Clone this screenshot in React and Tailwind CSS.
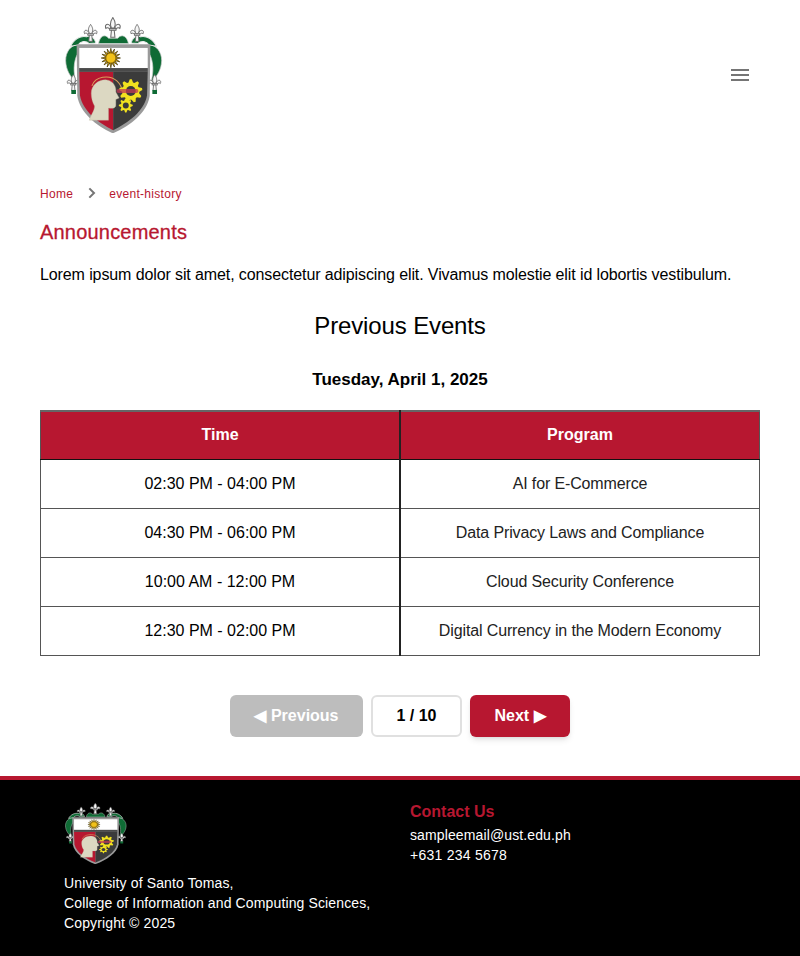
import { useState } from "react";

const rows = [
  { time: "02:30 PM - 04:00 PM", program: "AI for E-Commerce" },
  { time: "04:30 PM - 06:00 PM", program: "Data Privacy Laws and Compliance" },
  { time: "10:00 AM - 12:00 PM", program: "Cloud Security Conference" },
  { time: "12:30 PM - 02:00 PM", program: "Digital Currency in the Modern Economy" },
];

const starPoints = (cx, cy, outer, inner, n) =>
  Array.from({ length: n * 2 }, (_, i) => {
    const r = i % 2 === 0 ? outer : inner;
    const a = (Math.PI * i) / n;
    return `${cx + r * Math.sin(a)},${cy - r * Math.cos(a)}`;
  }).join(" ");

const gearPoints = (cx, cy, outer, inner, n) =>
  Array.from({ length: n * 4 }, (_, i) => {
    const r = i % 4 === 0 || i % 4 === 1 ? outer : inner;
    const a = (Math.PI * 2 * (i - 0.5)) / (n * 4);
    return `${cx + r * Math.sin(a)},${cy - r * Math.cos(a)}`;
  }).join(" ");

const Fleur = ({ x, y, s = 1 }) => (
  <g transform={`translate(${x} ${y}) scale(${s})`} fill="#f6f6f6" stroke="#6a6a6a" strokeWidth="3">
    <path d="M0 -30 C7 -20 10 -12 4 0 L-4 0 C-10 -12 -7 -20 0 -30 Z" />
    <path d="M-6 -4 C-14 -16 -25 -10 -20 1 C-16 -3 -12 -1 -8 4 Z" />
    <path d="M6 -4 C14 -16 25 -10 20 1 C16 -3 12 -1 8 4 Z" />
    <rect x="-9" y="1" width="18" height="5" />
    <path d="M-4 6 H4 L6 26 H-6 Z" />
  </g>
);

// crest drawn in the coordinates of a 3x crop of the logo
const Crest = ({ width, height, className }) => (
  <svg viewBox="45 35 295 345" width={width} height={height} preserveAspectRatio="none" className={className}>
    {/* green mantling */}
    <path d="M84 116 C62 120 47 138 47 165 C48 192 60 212 78 228 C70 200 70 170 82 146 Z" fill="#0f6b35" stroke="#cfcfcf" strokeWidth="2" />
    <path d="M298 116 C320 120 336 138 336 165 C335 192 322 212 304 228 C312 200 312 170 300 146 Z" fill="#0f6b35" stroke="#cfcfcf" strokeWidth="2" />
    <path d="M62 122 C72 100 92 90 110 94 C122 86 134 98 138 112 L118 114 C108 104 92 106 84 118 Z" fill="#0f6b35" stroke="#e8e8e8" strokeWidth="3" />
    <path d="M320 122 C310 100 290 90 272 94 C260 86 248 98 244 112 L264 114 C274 104 290 106 298 118 Z" fill="#0f6b35" stroke="#e8e8e8" strokeWidth="3" />
    <path d="M146 114 C150 92 164 84 176 98 L204 98 C216 84 232 92 236 114 Z" fill="#0f6b35" stroke="#d8d8d8" strokeWidth="2" />
    {/* finials */}
    <Fleur x={189} y={68} s={1.05} />
    <Fleur x={122} y={84} s={0.9} />
    <Fleur x={262} y={84} s={0.9} />
    <Fleur x={70} y={232} s={0.85} />
    <Fleur x={315} y={232} s={0.85} />
    <rect x="64" y="252" width="14" height="12" fill="#0f6b35" />
    <rect x="308" y="252" width="14" height="12" fill="#0f6b35" />
    {/* shield */}
    <path d="M80 116 L302 116 L300 270 C292 320 240 360 189 381 C140 360 90 320 82 270 Z" fill="#9a9a9a" />
    <rect x="88" y="127" width="206" height="60" fill="#ffffff" />
    <path d="M88 198 L190 198 L190 372 C145 350 98 315 90 268 Z" fill="#b71730" />
    <path d="M190 198 L294 198 L292 268 C284 315 235 350 190 372 Z" fill="#3b3b3b" />
    <rect x="88" y="187" width="206" height="11" fill="#4a4a4a" />
    {/* sun */}
    <polygon points={starPoints(183, 157, 29, 15, 16)} fill="#d9a514" stroke="#3a3000" strokeWidth="2" />
    <circle cx="183" cy="157" r="15" fill="#f2c21a" stroke="#6b5200" strokeWidth="2" />
    {/* ring and head */}
    <path d="M126 240 C135 212 178 204 202 226 C212 236 216 246 216 254" fill="none" stroke="#d9a05c" strokeWidth="3" />
    <path d="M124 262 C124 236 148 220 170 222 C192 225 200 244 198 258 L208 276 L198 280 L198 298 C198 306 188 308 176 306 L176 342 L118 342 C124 324 134 314 134 300 C128 290 124 276 124 262 Z" fill="#dcd8c2" stroke="#b9b49c" strokeWidth="1" />
    {/* gears */}
    <polygon points={gearPoints(243, 255, 35, 26, 9)} fill="#f2e21f" />
    <circle cx="243" cy="255" r="15" fill="#3b3b3b" />
    <polygon points={gearPoints(228, 298, 21, 15, 8)} fill="#f2e21f" />
    <circle cx="228" cy="298" r="9" fill="#3b3b3b" />
    <rect x="200" y="249" width="66" height="12" rx="6" fill="#c23a55" opacity="0.75" />
  </svg>
);

const App = () => {
  const [page] = useState(1);

  return (
    <div className="w-[800px] h-[956px] overflow-hidden bg-white text-black font-['Liberation_Sans',Arial,sans-serif]">
      <header className="h-[150px] flex items-center justify-between pl-[65px] pr-[51px]">
        <Crest width={98} height={116} className="-mt-[1px]" />
        <div className="flex flex-col gap-[3px]">
          <span className="block w-[18px] h-[2px] bg-[#757575]" />
          <span className="block w-[18px] h-[2px] bg-[#757575]" />
          <span className="block w-[18px] h-[2px] bg-[#757575]" />
        </div>
      </header>

      <main className="px-10">
        <nav className="mt-9 h-4 flex items-center text-xs tracking-[0.3px] text-[#b71730]">
          <span>Home</span>
          <svg viewBox="0 0 24 24" width="16" height="16" className="ml-[11px] mr-[9px] -mt-[2px]" fill="none" stroke="#757575" strokeWidth="3">
            <path d="M8 5l7 7-7 7" />
          </svg>
          <span>event-history</span>
        </nav>

        <h2 className="mt-4 text-xl leading-7 tracking-[0.2px] text-[#b71730] [-webkit-text-stroke:0.3px_#b71730]">Announcements</h2>

        <p className="mt-[17px] text-base leading-6 tracking-[-0.107px]">
          Lorem ipsum dolor sit amet, consectetur adipiscing elit. Vivamus molestie elit id lobortis vestibulum.
        </p>

        <h1 className="mt-[23px] text-center text-2xl leading-8 tracking-[-0.13px]">Previous Events</h1>
        <h3 className="mt-[26px] text-center text-[17px] leading-6 font-bold">Tuesday, April 1, 2025</h3>

        <table className="mt-[18px] w-[720px] table-fixed border-collapse text-base">
          <thead>
            <tr className="h-[48px] bg-[#b71730] text-white">
              <th className="border border-[#555] border-t-2 border-t-[#666] border-b-[#111] border-r-2 border-r-[#222] font-bold">Time</th>
              <th className="border border-[#555] border-t-2 border-t-[#666] border-b-[#111] font-bold">Program</th>
            </tr>
          </thead>
          <tbody>
            {rows.map((row) => (
              <tr key={row.time} className="h-[49px] text-center">
                <td className="border border-[#555] border-r-2 border-r-[#222] pt-[1px]">{row.time}</td>
                <td className="border border-[#555] pt-[1px] tracking-[-0.13px] text-[#222]">{row.program}</td>
              </tr>
            ))}
          </tbody>
        </table>

        <div className="mt-[39px] flex justify-center gap-2">
          <button className="w-[133px] h-[42px] rounded-md bg-[#bdbdbd] text-white font-bold text-base">◀ Previous</button>
          <div className="w-[91px] h-[42px] rounded-md border-2 border-[#e0e0e0] flex items-center justify-center font-bold text-base">{page} / 10</div>
          <button className="w-[100px] h-[42px] rounded-md bg-[#b71730] text-white font-bold text-base shadow-md">Next ▶</button>
        </div>
      </main>

      <footer className="mt-[39px] h-[180px] bg-black border-t-4 border-[#b71730] text-white text-sm leading-5 flex">
        <div className="w-[410px] pl-16 pt-[23px]">
          <Crest width={62} height={61} className="ml-[1px]" />
          <p className="mt-[9px] tracking-[0.13px]">
            University of Santo Tomas,
            <br />
            College of Information and Computing Sciences,
            <br />
            Copyright © 2025
          </p>
        </div>
        <div className="pt-5">
          <h4 className="text-base leading-6 font-bold text-[#b71730]">Contact Us</h4>
          <p className="mt-[1px] tracking-[0.12px]">sampleemail@ust.edu.ph</p>
          <p className="tracking-[0.25px]">+631 234 5678</p>
        </div>
      </footer>
    </div>
  );
};

export default App;
